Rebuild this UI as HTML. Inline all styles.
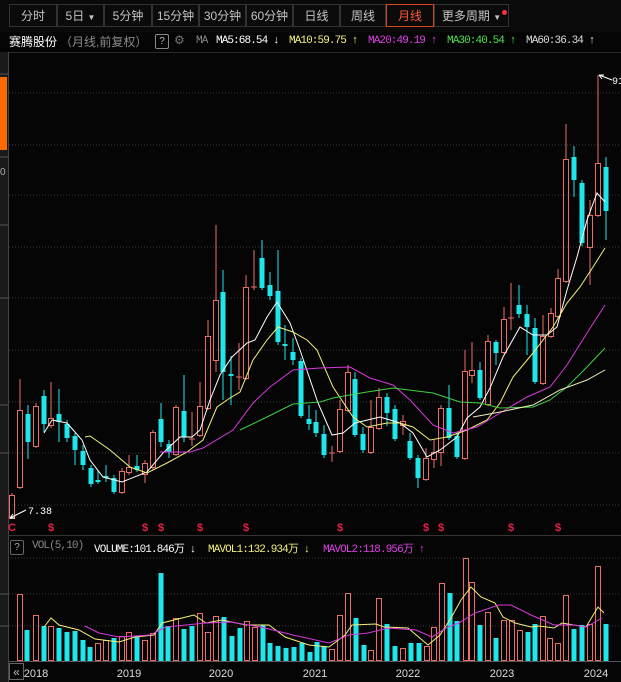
<!DOCTYPE html>
<html><head><meta charset="utf-8">
<style>
html,body{margin:0;padding:0;background:#050505;width:621px;height:682px;overflow:hidden;position:relative;font-family:"Liberation Sans","Noto Sans CJK SC",sans-serif}
.t{position:absolute;white-space:nowrap}
.tab{position:absolute;top:4px;height:23px;line-height:23px;text-align:center;color:#c4c4c4;font-size:12px;border:1px solid #333;background:#0b0b0b;box-sizing:border-box}
.m{font-family:"Liberation Mono",monospace;font-size:11px;position:absolute;white-space:nowrap;letter-spacing:-0.9px}
</style></head><body>
<div style="position:absolute;left:0;top:0;width:621px;height:32px;background:#0a0a0a"></div>
<div class="tab" style="left:9px;width:48px">分时</div>
<div class="tab" style="left:57px;width:47px">5日 <span style="font-size:8px">▼</span></div>
<div class="tab" style="left:104px;width:48px">5分钟</div>
<div class="tab" style="left:152px;width:47px">15分钟</div>
<div class="tab" style="left:199px;width:47px">30分钟</div>
<div class="tab" style="left:246px;width:47px">60分钟</div>
<div class="tab" style="left:293px;width:47px">日线</div>
<div class="tab" style="left:340px;width:46px">周线</div>
<div class="tab" style="left:386px;width:48px;border-color:#d8472a;color:#ff5a3a">月线</div>
<div class="tab" style="left:434px;width:75px">更多周期 <span style="font-size:8px">▼</span></div>
<div style="position:absolute;left:502px;top:10px;width:5px;height:5px;border-radius:3px;background:#ff3040"></div>

<div class="t" style="left:9px;top:33px;font-size:12px;color:#fff">赛腾股份</div>
<div class="t" style="left:60px;top:33px;font-size:12px;color:#8a8a8a">（月线,前复权）</div>
<div style="position:absolute;left:155px;top:34px;width:12px;height:13px;border:1px solid #888;border-radius:2px;color:#bbb;font-size:10px;text-align:center;line-height:13px">?</div>
<div class="t" style="left:174px;top:33px;font-size:12px;color:#777">⚙</div>
<div class="m" style="left:196px;top:35px;color:#888">MA</div>
<div class="m" style="left:216px;top:35px;color:#fff">MA5:68.54 ↓</div>
<div class="m" style="left:289px;top:35px;color:#f5f07a">MA10:59.75 ↑</div>
<div class="m" style="left:368px;top:35px;color:#e040e8">MA20:49.19 ↑</div>
<div class="m" style="left:447px;top:35px;color:#50e050">MA30:40.54 ↑</div>
<div class="m" style="left:526px;top:35px;color:#ddd">MA60:36.34 ↑</div>

<svg width="621" height="682" style="position:absolute;left:0;top:0" xmlns="http://www.w3.org/2000/svg">
<rect x="0" y="52" width="8" height="630" fill="#1a1a1a"/>
<rect x="0" y="77" width="7" height="73" fill="#ff6a00"/>
<text x="0" y="175" fill="#aaa" font-size="10" font-family="Liberation Sans">0</text>
<g stroke="#555"><line x1="0" y1="74" x2="8" y2="74"/><line x1="0" y1="157" x2="8" y2="157"/><line x1="0" y1="225" x2="8" y2="225"/><line x1="0" y1="298" x2="8" y2="298"/><line x1="0" y1="405" x2="8" y2="405"/><line x1="0" y1="453" x2="8" y2="453"/><line x1="0" y1="594" x2="8" y2="594"/><line x1="0" y1="626" x2="8" y2="626"/></g>
<line x1="8.5" y1="52" x2="8.5" y2="682" stroke="#444"/>
<line x1="9" y1="52.5" x2="621" y2="52.5" stroke="#2a2a2a"/>
<g stroke="#3a3a3a" stroke-dasharray="1,2">
<line x1="9" y1="93" x2="621" y2="93"/><line x1="9" y1="145" x2="621" y2="145"/><line x1="9" y1="195" x2="621" y2="195"/><line x1="9" y1="247" x2="621" y2="247"/><line x1="9" y1="298" x2="621" y2="298"/><line x1="9" y1="350" x2="621" y2="350"/><line x1="9" y1="402" x2="621" y2="402"/><line x1="9" y1="453" x2="621" y2="453"/><line x1="9" y1="505" x2="621" y2="505"/>
<line x1="9" y1="558" x2="621" y2="558"/><line x1="9" y1="594" x2="621" y2="594"/><line x1="9" y1="626" x2="621" y2="626"/>
</g>
<line x1="9" y1="535.5" x2="621" y2="535.5" stroke="#333"/>
<line x1="9" y1="661.5" x2="621" y2="661.5" stroke="#555"/>

<g stroke="#ec6e68" fill="none" stroke-width="1">
<path d="M12 493V495M12 518V519"/><rect x="9.5" y="495.5" width="5" height="23"/>
<path d="M20 379V410M20 487V489"/><rect x="17.5" y="410.5" width="5" height="77"/>
<path d="M36 403V406M36 446V448"/><rect x="33.5" y="406.5" width="5" height="40"/>
<path d="M51 382V418M51 425V428"/><rect x="48.5" y="418.5" width="5" height="7"/>
<path d="M122 468V471M122 492V494"/><rect x="119.5" y="471.5" width="5" height="21"/>
<path d="M129 455V467M129 472V475"/><rect x="126.5" y="467.5" width="5" height="5"/>
<path d="M145 460V463M145 474V483"/><rect x="142.5" y="463.5" width="5" height="11"/>
<path d="M153 430V432M153 467V470"/><rect x="150.5" y="432.5" width="5" height="35"/>
<path d="M176 405V407M176 454V456"/><rect x="173.5" y="407.5" width="5" height="47"/>
<path d="M192 412V446M189 439H195"/>
<path d="M200 382V406M200 435V437"/><rect x="197.5" y="406.5" width="5" height="29"/>
<path d="M208 320V336M208 408V410"/><rect x="205.5" y="336.5" width="5" height="72"/>
<path d="M216 225V300M216 360V372"/><rect x="213.5" y="300.5" width="5" height="60"/>
<path d="M239 343V390M236 377H242"/>
<path d="M246 275V287M246 378V380"/><rect x="243.5" y="287.5" width="5" height="91"/>
<path d="M254 250V290M251 287H257"/>
<path d="M332 446V462M329 453H335"/>
<path d="M340 400V409M340 451V453"/><rect x="337.5" y="409.5" width="5" height="42"/>
<path d="M348 365V372M348 410V412"/><rect x="345.5" y="372.5" width="5" height="38"/>
<path d="M371 400V427M371 452V454"/><rect x="368.5" y="427.5" width="5" height="25"/>
<path d="M379 388V397M379 428V430"/><rect x="376.5" y="397.5" width="5" height="31"/>
<path d="M403 415V421M403 425V435"/><rect x="400.5" y="421.5" width="5" height="4"/>
<path d="M426 448V458M426 479V481"/><rect x="423.5" y="458.5" width="5" height="21"/>
<path d="M434 440V452M434 459V468"/><rect x="431.5" y="452.5" width="5" height="7"/>
<path d="M441 405V408M441 452V466"/><rect x="438.5" y="408.5" width="5" height="44"/>
<path d="M465 350V371M465 458V460"/><rect x="462.5" y="371.5" width="5" height="87"/>
<path d="M472 342V370M472 375V383"/><rect x="469.5" y="370.5" width="5" height="5"/>
<path d="M488 335V341M488 404V406"/><rect x="485.5" y="341.5" width="5" height="63"/>
<path d="M504 307V319M504 352V354"/><rect x="501.5" y="319.5" width="5" height="33"/>
<path d="M511 283V330M508 318H514"/>
<path d="M543 315V336M543 383V385"/><rect x="540.5" y="336.5" width="5" height="47"/>
<path d="M551 308V313M551 336V338"/><rect x="548.5" y="313.5" width="5" height="23"/>
<path d="M558 269V278M558 316V318"/><rect x="555.5" y="278.5" width="5" height="38"/>
<path d="M566 124V159M566 281V283"/><rect x="563.5" y="159.5" width="5" height="122"/>
<path d="M590 200V215M590 247V285"/><rect x="587.5" y="215.5" width="5" height="32"/>
<path d="M598 75V163M598 215V217"/><rect x="595.5" y="163.5" width="5" height="52"/>
</g>
<g fill="#1ee6ea" stroke="#1ee6ea" stroke-width="1">
<path d="M28 405V459M44 390V432M59 389V442M67 420V442M75 433V465M83 445V470M91 465V487M98 470V484M106 465V482M114 475V494M137 455V472M161 403V447M169 440V458M184 375V442M223 270V400M231 356V405M262 240V290M270 272V300M278 250V345M285 325V360M293 338V365M301 358V418M309 405V430M316 410V437M324 425V458M355 372V437M363 427V453M387 393V426M395 405V441M410 433V460M418 455V488M449 385V440M457 432V459M480 362V400M496 340V365M519 285V318M527 305V355M535 318V384M574 146V197M582 180V246M606 157V240" fill="none"/>
<g stroke="none">
<rect x="25.5" y="414" width="5" height="28"/><rect x="41.5" y="396" width="5" height="28"/><rect x="56.5" y="414" width="5" height="8"/><rect x="64.5" y="424" width="5" height="14"/><rect x="72.5" y="436" width="5" height="14"/><rect x="80.5" y="451" width="5" height="14"/><rect x="88.5" y="468" width="5" height="16"/><rect x="95.5" y="480" width="5" height="2"/><rect x="103.5" y="476" width="5" height="2"/><rect x="111.5" y="478" width="5" height="14"/><rect x="134.5" y="466" width="5" height="4"/><rect x="158.5" y="419" width="5" height="23"/><rect x="166.5" y="444" width="5" height="8"/><rect x="181.5" y="411" width="5" height="26"/><rect x="220.5" y="292" width="5" height="80"/><rect x="228.5" y="374" width="5" height="2"/><rect x="259.5" y="258" width="5" height="30"/><rect x="267.5" y="285" width="5" height="11"/><rect x="275.5" y="291" width="5" height="51"/><rect x="282.5" y="344" width="5" height="2"/><rect x="290.5" y="352" width="5" height="8"/><rect x="298.5" y="361" width="5" height="55"/><rect x="306.5" y="419" width="5" height="5"/><rect x="313.5" y="422" width="5" height="11"/><rect x="321.5" y="434" width="5" height="21"/><rect x="352.5" y="379" width="5" height="56"/><rect x="360.5" y="434" width="5" height="16"/><rect x="384.5" y="397" width="5" height="16"/><rect x="392.5" y="409" width="5" height="30"/><rect x="407.5" y="441" width="5" height="17"/><rect x="415.5" y="458" width="5" height="20"/><rect x="446.5" y="408" width="5" height="30"/><rect x="454.5" y="436" width="5" height="21"/><rect x="477.5" y="370" width="5" height="28"/><rect x="493.5" y="342" width="5" height="11"/><rect x="516.5" y="305" width="5" height="9"/><rect x="524.5" y="314" width="5" height="13"/><rect x="532.5" y="328" width="5" height="54"/><rect x="571.5" y="157" width="5" height="23"/><rect x="579.5" y="183" width="5" height="60"/><rect x="603.5" y="167" width="5" height="44"/>
</g></g>

<g fill="none" stroke-width="1">
<polyline stroke="#ffffff" points="44,433 52,420 67,423 82,440 90,460 103,477 122,482 147,472 163,453 180,437 192,437 200,430 210,400 220,375 232,357 247,343 255,340 267,317 277,302 290,323 300,350 318,403 332,435 343,433 355,423 380,417 400,423 413,433 427,457 440,450 457,437 467,418 480,407 490,388 503,357 520,327 533,335 547,335 557,327 567,290 577,257 587,220 597,193 605,202"/>
<polyline stroke="#f5f07a" points="85,437 90,436 110,450 130,467 147,473 167,463 187,452 203,440 217,407 230,398 240,392 253,360 267,340 278,327 293,332 307,340 317,350 333,387 353,417 367,427 387,423 400,423 413,427 430,440 447,437 467,430 487,420 500,403 513,377 533,353 553,327 567,303 580,287 593,267 605,248"/>
<polyline stroke="#d838e0" points="160,452 190,452 203,448 233,430 253,403 270,387 293,370 320,368 350,367 370,378 393,385 410,400 433,425 453,433 477,427 500,413 527,397 550,387 567,365 587,333 605,305"/>
<polyline stroke="#40d040" points="240,430 267,417 293,404 320,402 333,398 367,392 393,388 433,393 460,402 480,403 500,408 533,407 550,400 567,387 587,367 605,348"/>
<polyline stroke="#eeeebb" points="473,417 500,412 533,405 560,390 587,380 605,370"/>
</g>

<path d="M10 518L26 510M10 518l5 0M10 518l3-4" stroke="#fff" fill="none"/>
<text x="28" y="514" fill="#fff" font-size="10" font-family="Liberation Mono">7.38</text>
<path d="M599 75L612 80M599 75l5 0M599 75l3 4" stroke="#fff" fill="none"/>
<text x="612" y="84" fill="#fff" font-size="10" font-family="Liberation Mono">91</text>
<g fill="#e8204a" font-size="11" font-weight="bold" font-family="Liberation Sans" text-anchor="middle">
<text x="12" y="531">C</text><text x="51" y="531">$</text><text x="145" y="531">$</text><text x="161" y="531">$</text><text x="200" y="531">$</text><text x="246" y="531">$</text><text x="340" y="531">$</text><text x="426" y="531">$</text><text x="441" y="531">$</text><text x="511" y="531">$</text><text x="558" y="531">$</text>
</g>

<g stroke="#ec6e68" fill="none">
<rect x="17.5" y="594.5" width="5" height="66"/><rect x="33.5" y="615.5" width="5" height="45"/><rect x="48.5" y="626.5" width="5" height="34"/><rect x="95.5" y="643.5" width="5" height="17"/><rect x="103.5" y="640.5" width="5" height="20"/><rect x="119.5" y="636.5" width="5" height="24"/><rect x="126.5" y="632.5" width="5" height="28"/><rect x="142.5" y="640.5" width="5" height="20"/><rect x="150.5" y="633.5" width="5" height="27"/><rect x="173.5" y="618.5" width="5" height="42"/><rect x="197.5" y="613.5" width="5" height="47"/><rect x="205.5" y="632.5" width="5" height="28"/><rect x="213.5" y="616.5" width="5" height="44"/><rect x="244.5" y="621.5" width="5" height="39"/><rect x="252.5" y="627.5" width="5" height="33"/><rect x="329.5" y="649.5" width="5" height="11"/><rect x="337.5" y="615.5" width="5" height="45"/><rect x="345.5" y="593.5" width="5" height="67"/><rect x="368.5" y="650.5" width="5" height="10"/><rect x="376.5" y="598.5" width="5" height="62"/><rect x="400.5" y="648.5" width="5" height="12"/><rect x="424.5" y="646.5" width="5" height="14"/><rect x="431.5" y="627.5" width="5" height="33"/><rect x="439.5" y="583.5" width="5" height="77"/><rect x="463.5" y="558.5" width="5" height="102"/><rect x="469.5" y="582.5" width="5" height="78"/><rect x="485.5" y="612.5" width="5" height="48"/><rect x="501.5" y="620.5" width="5" height="40"/><rect x="509.5" y="620.5" width="5" height="40"/><rect x="517.5" y="630.5" width="5" height="30"/><rect x="540.5" y="616.5" width="5" height="44"/><rect x="547.5" y="638.5" width="5" height="22"/><rect x="555.5" y="643.5" width="5" height="17"/><rect x="563.5" y="595.5" width="5" height="65"/><rect x="587.5" y="624.5" width="5" height="36"/><rect x="595.5" y="566.5" width="5" height="94"/>
</g>
<g fill="#1ee6ea">
<rect x="24.5" y="630" width="5" height="31"/><rect x="41.5" y="626" width="5" height="35"/><rect x="56.5" y="628" width="5" height="33"/><rect x="64.5" y="632" width="5" height="29"/><rect x="72.5" y="631" width="5" height="30"/><rect x="80.5" y="640" width="5" height="21"/><rect x="87.5" y="647" width="5" height="14"/><rect x="111.5" y="638" width="5" height="23"/><rect x="134.5" y="637" width="5" height="24"/><rect x="158.5" y="573" width="5" height="88"/><rect x="165.5" y="626" width="5" height="35"/><rect x="181.5" y="629" width="5" height="32"/><rect x="189.5" y="626" width="5" height="35"/><rect x="221.5" y="617" width="5" height="44"/><rect x="229.5" y="636" width="5" height="25"/><rect x="237.5" y="628" width="5" height="33"/><rect x="260.5" y="625" width="5" height="36"/><rect x="267.5" y="643" width="5" height="18"/><rect x="275.5" y="646" width="5" height="15"/><rect x="283.5" y="648" width="5" height="13"/><rect x="291.5" y="647" width="5" height="14"/><rect x="299.5" y="643" width="5" height="18"/><rect x="307.5" y="652" width="5" height="9"/><rect x="314.5" y="642" width="5" height="19"/><rect x="321.5" y="646" width="5" height="15"/><rect x="353.5" y="618" width="5" height="43"/><rect x="361.5" y="645" width="5" height="16"/><rect x="384.5" y="624" width="5" height="37"/><rect x="392.5" y="646" width="5" height="15"/><rect x="408.5" y="643" width="5" height="18"/><rect x="416.5" y="643" width="5" height="18"/><rect x="447.5" y="593" width="5" height="68"/><rect x="454.5" y="621" width="5" height="40"/><rect x="477.5" y="625" width="5" height="36"/><rect x="493.5" y="638" width="5" height="23"/><rect x="525.5" y="632" width="5" height="29"/><rect x="532.5" y="624" width="5" height="37"/><rect x="571.5" y="629" width="5" height="32"/><rect x="579.5" y="625" width="5" height="36"/><rect x="603.5" y="624" width="5" height="37"/>
</g>
<g fill="none">
<polyline stroke="#f5f07a" points="44,627 51,618 59,625 79,630 95,639 119,642 135,637 154,635 162,623 186,617 194,615 206,623 222,620 246,625 269,625 285,637 309,645 329,647 345,635 352,625 376,624 384,627 408,628 428,645 440,635 451,618 461,600 471,587 481,597 495,603 503,617 515,623 531,627 539,626 554,628 562,623 586,627 598,607 604,613"/>
<polyline stroke="#d838e0" points="85,626 99,633 119,637 150,635 166,627 206,623 230,622 261,627 293,635 329,643 349,635 368,633 388,628 416,630 432,637 448,627 459,623 475,613 499,605 511,605 531,615 554,625 574,625 586,627 602,618"/>
</g>

<rect x="9.5" y="663.5" width="14" height="16" fill="none" stroke="#666"/>
<text x="16.5" y="676" fill="#bbb" font-size="12" text-anchor="middle" font-family="Liberation Sans">«</text>
<g fill="#ddd" font-size="11" font-family="Liberation Sans" text-anchor="middle">
<text x="36" y="677">2018</text><text x="129" y="677">2019</text><text x="221" y="677">2020</text><text x="315" y="677">2021</text><text x="408" y="677">2022</text><text x="502" y="677">2023</text><text x="596" y="677">2024</text>
</g>
</svg>

<div style="position:absolute;left:10px;top:540px;width:12px;height:13px;border:1px solid #666;border-radius:2px;color:#aaa;font-size:10px;text-align:center;line-height:13px">?</div>
<div class="m" style="left:32px;top:540px;color:#888">VOL(5,10)</div>
<div class="m" style="left:94px;top:540px;color:#fff">VOLUME:101.846万 ↓</div>
<div class="m" style="left:208px;top:540px;color:#f5f07a">MAVOL1:132.934万 ↓</div>
<div class="m" style="left:323px;top:540px;color:#e040e8">MAVOL2:118.956万 ↑</div>
</body></html>
